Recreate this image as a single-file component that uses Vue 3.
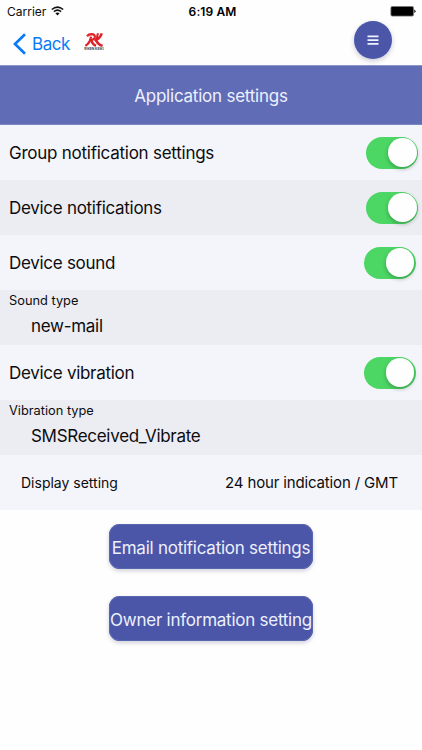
<script setup>
import { ref } from 'vue'

const rows = ref([
  { kind: 'switch', label: 'Group notification settings', on: true, wide: true },
  { kind: 'switch', label: 'Device notifications', on: true, wide: true },
  { kind: 'switch', label: 'Device sound', on: true },
  { kind: 'value', label: 'Sound type', value: 'new-mail' },
  { kind: 'switch', label: 'Device vibration', on: true },
  { kind: 'value', label: 'Vibration type', value: 'SMSReceived_Vibrate' },
  { kind: 'display', label: 'Display setting', value: '24 hour indication / GMT' },
])
</script>

<template>
  <main class="screen">
    <header class="top">
      <div class="status">
        <div class="carrier">
          <span>Carrier</span>
          <svg width="13" height="10" viewBox="0 0 13 10" fill="none" stroke="#111" stroke-width="1.6">
            <path d="M0.8 3.5 Q6.5 -1.4 12.2 3.5" />
            <path d="M2.9 5.7 Q6.5 2.7 10.1 5.7" />
            <path d="M6.5 9.4 L4.4 7.3 Q6.5 5.7 8.6 7.3 Z" fill="#111" stroke="none" />
          </svg>
        </div>
        <time class="clock">6:19 AM</time>
        <svg class="battery" width="26" height="11" viewBox="0 0 26 11">
          <rect x="0.9" y="0.5" width="22.6" height="9.6" rx="1.4" fill="#000" stroke="#777" stroke-width="0.8" />
          <path d="M24.2 3.6 Q25.6 4 25.6 5.3 Q25.6 6.6 24.2 7 Z" fill="#222" />
        </svg>
      </div>
      <nav class="nav">
        <a class="back">
          <svg width="13" height="22" viewBox="0 0 13 22" fill="none" stroke="#0b7bf5" stroke-width="2.7">
            <path d="M12 1.2 L2 11 L12 20.8" />
          </svg>
          <span>Back</span>
        </a>
        <div class="logo">
          <svg width="18" height="14" viewBox="0 0 18 14" fill="none" stroke="#e02127">
            <path d="M2 3.2 Q3.6 1.2 6.6 1.2 Q10.4 1.3 9.8 4.2 Q9 6.9 4.6 7.2" stroke-width="2.2" />
            <path d="M6 3.6 Q5.4 9.6 0.4 12.8" stroke-width="2.2" />
            <path d="M6.4 7 Q7.4 11.6 11 12.8" stroke-width="2.5" />
            <path d="M12.9 0.2 Q12.6 4.4 10 8.2" stroke-width="2.1" />
            <path d="M16.8 0.4 Q15.2 5.2 11 7 Q12.8 11.8 17.6 12.8" stroke-width="2.5" />
          </svg>
          <span>RIKEN KEIKI</span>
        </div>
        <button class="menu" aria-label="Menu">
          <svg width="12" height="10" viewBox="0 0 12 10" stroke="#f0f2ff" stroke-width="1.7">
            <path d="M0.5 1.3 H11.5 M0.5 5.1 H11.5 M0.5 8.9 H11.5" />
          </svg>
        </button>
      </nav>
    </header>

    <h1 class="title">Application settings</h1>

    <section>
      <div v-for="row in rows" :key="row.label" class="row" :class="row.kind">
        <span class="label">{{ row.label }}</span>
        <button
          v-if="row.kind === 'switch'"
          class="toggle"
          :class="{ on: row.on, edge: row.wide }"
          role="switch"
          :aria-checked="row.on"
          @click="row.on = !row.on"
        ></button>
        <span v-else class="value">{{ row.value }}</span>
      </div>
    </section>

    <div class="actions">
      <button class="action">Email notification settings</button>
      <button class="action">Owner information setting</button>
    </div>
  </main>
</template>

<style>
body {
  margin: 0;
  background: #fefefe;
}
</style>

<style scoped>
.screen {
  width: 422px;
  height: 750px;
  overflow: hidden;
  background: #fefefe;
  font-family: Inter, "Liberation Sans", sans-serif;
  color: #0c0c0f;
  white-space: nowrap;
}
button {
  border: 0;
  padding: 0;
  font-family: inherit;
}
.top {
  height: 65px;
}
.status {
  display: grid;
  grid-template-columns: 1fr auto 1fr;
  align-items: center;
  height: 22px;
  padding: 0 6px 0 7px;
  font-size: 12px;
}
.carrier {
  display: flex;
  align-items: center;
  gap: 5px;
}
.clock {
  padding-left: 2px;
  font-weight: 600;
  letter-spacing: 0.1px;
  color: #000;
}
.battery {
  justify-self: end;
}
.nav {
  display: flex;
  align-items: center;
  height: 43px;
  padding: 0 30px 0 13px;
}
.back {
  display: flex;
  align-items: center;
  width: 58px;
  gap: 6px;
  color: #0b7bf5;
  font-size: 17px;
  letter-spacing: -0.45px;
}
.logo {
  display: flex;
  flex-direction: column;
  align-items: center;
  width: 20px;
  margin: -3px 0 0 13px;
}
.logo span {
  font-size: 3.3px;
  font-weight: 700;
  line-height: 5px;
  color: #444;
}
.menu {
  display: flex;
  align-items: center;
  justify-content: center;
  width: 38px;
  height: 38px;
  margin: -7px 0 0 auto;
  border-radius: 50%;
  background: #4b56a8;
  box-shadow: 0 2px 5px rgba(40, 45, 90, 0.25);
}
.title {
  display: flex;
  align-items: center;
  justify-content: center;
  box-sizing: border-box;
  height: 60px;
  margin: 0;
  padding-top: 2px;
  border-top: 1px solid #8d96c9;
  border-bottom: 1px solid #7a86c4;
  background: #606db6;
  color: #edf0fd;
  font-size: 17px;
  font-weight: 400;
  letter-spacing: -0.23px;
}
.row {
  display: flex;
  align-items: center;
  justify-content: space-between;
  box-sizing: border-box;
  height: 55px;
  padding: 0 6.5px 0 9px;
  background: #f4f5fa;
  font-size: 17px;
  letter-spacing: -0.29px;
}
.row:first-child {
  letter-spacing: -0.25px;
}
.row:nth-child(2),
.row.value {
  background: #ecedf2;
}
.row.value {
  flex-direction: column;
  align-items: flex-start;
  justify-content: flex-start;
}
.row.value .label {
  height: 21px;
  font-size: 12.8px;
  line-height: 21px;
  letter-spacing: 0;
}
.row.value .value {
  margin-left: 22px;
  line-height: 31px;
}
.row.display {
  padding: 0 24px 0 21px;
}
.row.display .label {
  font-size: 14px;
  letter-spacing: 0;
}
.row.display .value {
  font-size: 15px;
  letter-spacing: -0.15px;
}
.toggle {
  display: flex;
  align-items: center;
  box-sizing: border-box;
  width: 52px;
  height: 32px;
  padding: 0 1.5px;
  border-radius: 16px;
  background: #d8d9de;
}
.toggle.on {
  justify-content: flex-end;
  background: #4cd664;
}
.toggle.edge {
  margin-right: -2.5px;
}
.toggle::after {
  content: "";
  width: 28.5px;
  height: 28.5px;
  border-radius: 50%;
  background: #fefefe;
  box-shadow: 0 2px 4px rgba(0, 0, 0, 0.26);
}
.actions {
  display: flex;
  flex-direction: column;
  align-items: center;
  gap: 27px;
  padding-top: 14px;
}
.action {
  display: flex;
  align-items: center;
  justify-content: center;
  width: 204px;
  height: 45px;
  padding-top: 2px;
  border-radius: 11px;
  background: #4b56a8;
  box-shadow: 0 2px 4px rgba(40, 45, 90, 0.22), inset 0 0 0 1px #5a65b0;
  color: #edf0fd;
  font-size: 17px;
  letter-spacing: -0.25px;
}
</style>
